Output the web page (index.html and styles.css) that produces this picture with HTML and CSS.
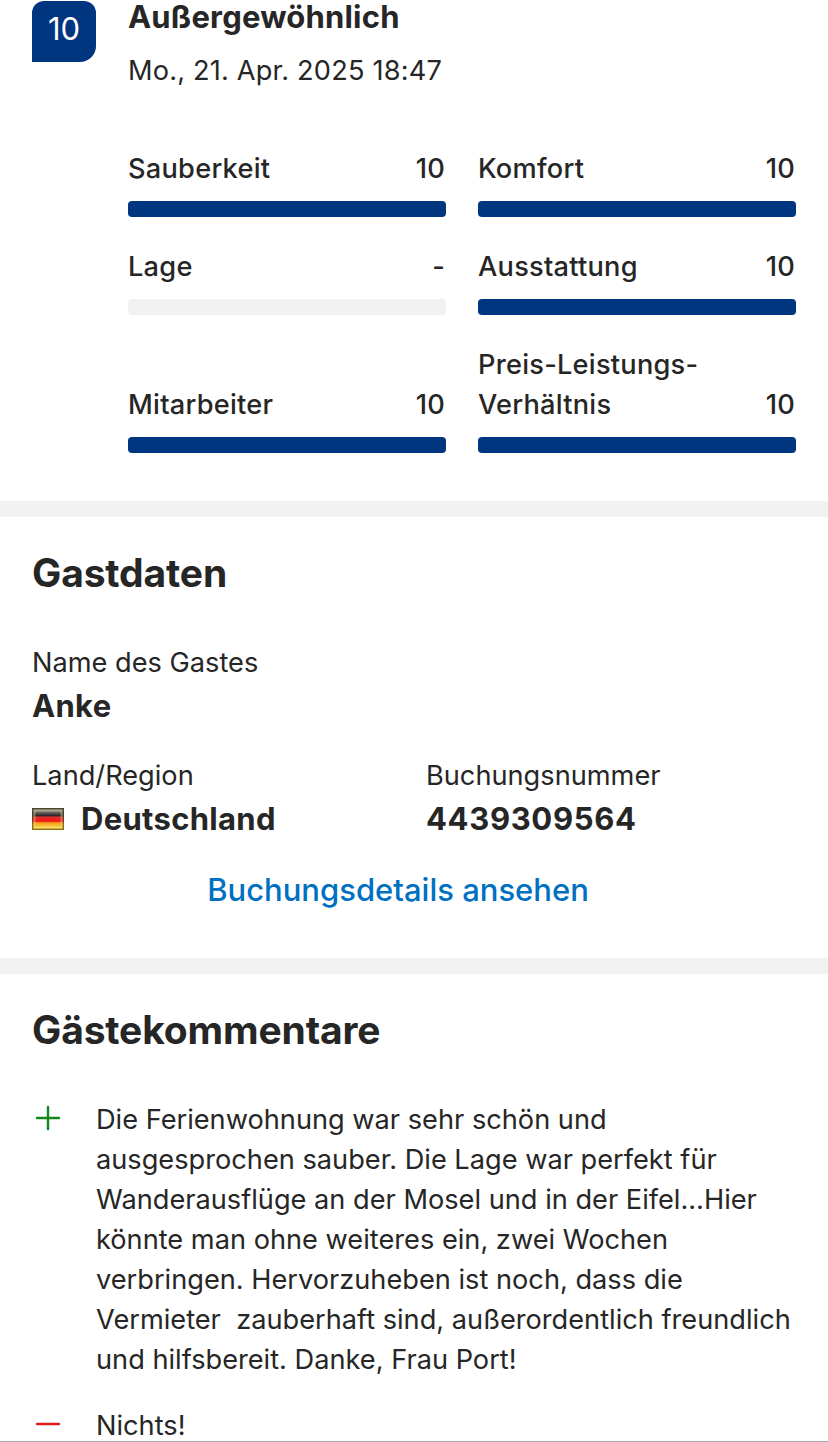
FILE: index.html
```html
<!DOCTYPE html>
<html lang="de">
<head>
  <meta charset="UTF-8" />
  <meta name="viewport" content="width=device-width, initial-scale=1.0" />
  <title>Gästebewertung</title>
  <link rel="stylesheet" href="styles.css">
</head>
<body>
  <section class="review">
    <div class="score">10</div>
    <div class="review-body">
      <h1>Außergewöhnlich</h1>
      <p class="date">Mo., 21. Apr. 2025 18:47</p>
      <div class="ratings">
        <div class="rating">
          <div class="rating-label"><span>Sauberkeit</span><span>10</span></div>
          <div class="bar full"></div>
        </div>
        <div class="rating">
          <div class="rating-label"><span>Komfort</span><span>10</span></div>
          <div class="bar full"></div>
        </div>
        <div class="rating">
          <div class="rating-label"><span>Lage</span><span>-</span></div>
          <div class="bar"></div>
        </div>
        <div class="rating">
          <div class="rating-label"><span>Ausstattung</span><span>10</span></div>
          <div class="bar full"></div>
        </div>
        <div class="rating">
          <div class="rating-label"><span>Mitarbeiter</span><span>10</span></div>
          <div class="bar full"></div>
        </div>
        <div class="rating">
          <div class="rating-label"><span>Preis-Leistungs-<br>Verhältnis</span><span>10</span></div>
          <div class="bar full"></div>
        </div>
      </div>
    </div>
  </section>

  <section class="guest">
    <h2>Gastdaten</h2>
    <dl class="guest-data">
      <div class="field wide">
        <dt>Name des Gastes</dt>
        <dd>Anke</dd>
      </div>
      <div class="field">
        <dt>Land/Region</dt>
        <dd>
          <svg class="flag" viewBox="0 0 32 22" width="32" height="22">
            <defs>
              <linearGradient id="flag-fill" x1="0" y1="0" x2="0" y2="1">
                <stop offset="0" stop-color="#8a8a80" />
                <stop offset="0.15" stop-color="#6a6666" />
                <stop offset="0.32" stop-color="#2e2424" />
                <stop offset="0.4" stop-color="#d8302c" />
                <stop offset="0.62" stop-color="#f81414" />
                <stop offset="0.7" stop-color="#f0a020" />
                <stop offset="1" stop-color="#ffe03c" />
              </linearGradient>
              <linearGradient id="flag-edge" x1="0" y1="0" x2="0" y2="1">
                <stop offset="0" stop-color="#45452f" />
                <stop offset="0.35" stop-color="#55402a" />
                <stop offset="0.6" stop-color="#96341a" />
                <stop offset="0.75" stop-color="#96701a" />
                <stop offset="1" stop-color="#8a6a14" />
              </linearGradient>
            </defs>
            <rect width="32" height="22" fill="url(#flag-edge)" />
            <rect x="1.5" y="1.5" width="29" height="19" fill="url(#flag-fill)" />
            <rect x="2.5" y="2.5" width="27" height="17" fill="none" stroke="#e8e0b0" stroke-opacity="0.4" stroke-width="2" />
          </svg>
          Deutschland
        </dd>
      </div>
      <div class="field">
        <dt>Buchungsnummer</dt>
        <dd class="number">4439309564</dd>
      </div>
    </dl>
    <a class="details" href="#">Buchungsdetails ansehen</a>
  </section>

  <section class="comments">
    <h2>Gästekommentare</h2>
    <div class="comment">
      <svg class="sign plus" viewBox="0 0 32 32" width="32" height="32">
        <path d="M5 16h22M16 5v22" />
      </svg>
      <p>Die Ferienwohnung war sehr schön und<br>
        ausgesprochen sauber. Die Lage war perfekt für<br>
        Wanderausflüge an der Mosel und in der Eifel...Hier<br>
        könnte man ohne weiteres ein, zwei Wochen<br>
        verbringen. Hervorzuheben ist noch, dass die<br>
        Vermieter&nbsp; zauberhaft sind, außerordentlich freundlich<br>
        und hilfsbereit. Danke, Frau Port!</p>
    </div>
    <div class="comment">
      <svg class="sign minus" viewBox="0 0 32 32" width="32" height="32">
        <path d="M5 16h22" />
      </svg>
      <p>Nichts!</p>
    </div>
  </section>
</body>
</html>
```

FILE: styles.css
```css
* {
  box-sizing: border-box;
}
body {
  margin: 0;
  height: 1442px;
  overflow: hidden;
  font-family: Inter, "Liberation Sans", sans-serif;
  font-size: 27.2px;
  line-height: 40px;
  color: #262626;
  background: #fff;
  border-bottom: 1px solid #aaa;
}
h1, h2, p, dl, dt, dd {
  margin: 0;
}
.review {
  display: flex;
  gap: 32px;
  height: 501px;
  padding: 0 32px;
}
.score {
  width: 64px;
  height: 61px;
  margin-top: 1px;
  background: #003580;
  color: #fff;
  border-radius: 12px 12px 16px 0;
  font-size: 31px;
  line-height: 56px;
  text-align: center;
}
.review-body {
  flex: 1;
}
h1 {
  font-size: 31px;
  line-height: 34px;
  font-weight: 700;
  letter-spacing: 0.2px;
}
.date {
  margin-top: 17px;
  letter-spacing: 0.17px;
}
.ratings {
  display: grid;
  grid-template-columns: 1fr 1fr;
  gap: 30px 32px;
  margin-top: 58px;
}
.rating {
  display: flex;
  flex-direction: column;
  justify-content: flex-end;
}
.rating-label {
  display: flex;
  justify-content: space-between;
  align-items: flex-end;
  padding-right: 1px;
  font-weight: 500;
  letter-spacing: 0.25px;
}
.bar {
  height: 16px;
  margin-top: 12px;
  border-radius: 4px;
  background: #f1f1f1;
}
.bar.full {
  background: #003580;
}
.guest,
.comments {
  border-top: 16px solid #f1f1f1;
  padding: 28px 32px 0;
}
.guest {
  height: 457px;
}
h2 {
  font-size: 39px;
  line-height: 56px;
  font-weight: 700;
  letter-spacing: -0.14px;
}
.guest-data {
  display: grid;
  grid-template-columns: 1fr 370px;
  row-gap: 27px;
  margin-top: 42px;
}
.wide {
  grid-column: 1 / 3;
}
dd {
  display: flex;
  align-items: center;
  gap: 17px;
  height: 46px;
  font-size: 31px;
  font-weight: 700;
  letter-spacing: 0.3px;
}
.number {
  letter-spacing: 0.65px;
}
.details {
  display: block;
  width: 732px;
  margin-top: 28px;
  font-size: 31px;
  font-weight: 500;
  text-align: center;
  text-decoration: none;
  color: #0071c2;
}
.comment {
  display: flex;
  gap: 32px;
  margin-top: 26px;
}
.comment p {
  white-space: nowrap;
}
h2 + .comment {
  margin-top: 42px;
}
.sign {
  flex: none;
  margin-top: 2px;
  fill: none;
  stroke-width: 2.4;
  stroke-linecap: round;
}
.plus {
  stroke: #128a1a;
}
.minus {
  stroke: #d81e1e;
}
```
